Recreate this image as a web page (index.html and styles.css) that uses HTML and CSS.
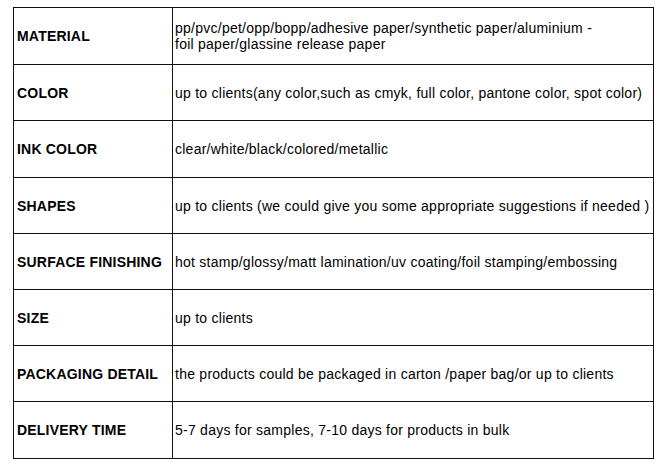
FILE: index.html
```html
<!DOCTYPE html>
<html>
<head>
<meta charset="utf-8">
<link rel="stylesheet" href="styles.css">
</head>
<body>
<table class="spec">
<tr class="r57"><td class="label">MATERIAL</td><td class="value">pp/pvc/pet/opp/bopp/adhesive paper/synthetic paper/aluminium -<br>foil paper/glassine release paper</td></tr>
<tr class="r56"><td class="label">COLOR</td><td class="value">up to clients(any color,such as cmyk, full color, pantone color, spot color)</td></tr>
<tr class="r57"><td class="label">INK COLOR</td><td class="value">clear/white/black/colored/metallic</td></tr>
<tr class="r56"><td class="label">SHAPES</td><td class="value">up to clients (we could give you some appropriate suggestions if needed )</td></tr>
<tr class="r56"><td class="label">SURFACE FINISHING</td><td class="value">hot stamp/glossy/matt lamination/uv coating/foil stamping/embossing</td></tr>
<tr class="r56"><td class="label">SIZE</td><td class="value">up to clients</td></tr>
<tr class="r56"><td class="label">PACKAGING DETAIL</td><td class="value">the products could be packaged in carton /paper bag/or up to clients</td></tr>
<tr class="r57"><td class="label">DELIVERY TIME</td><td class="value">5-7 days for samples, 7-10 days for products in bulk</td></tr>
</table>
</body>
</html>
```

FILE: styles.css
```css
html, body {
  margin: 0;
  padding: 0;
  background: #fff;
}
body {
  padding: 7px 0 0 13px;
  font-family: "Liberation Sans", Arial, sans-serif;
  color: #000;
}
.spec {
  border-collapse: collapse;
  width: 641px;
  table-layout: fixed;
}
.spec td {
  border: 1px solid #111;
  vertical-align: middle;
}
.r57 { height: 57px; }
.r56 { height: 56px; }
.label {
  width: 152px;
  padding: 0 3px;
  font-weight: bold;
  font-size: 14px;
  letter-spacing: 0.2px;
}
.value {
  padding: 0 2px 0 2px;
  font-size: 14px;
  letter-spacing: 0.25px;
  line-height: 16px;
  white-space: nowrap;
}
```
